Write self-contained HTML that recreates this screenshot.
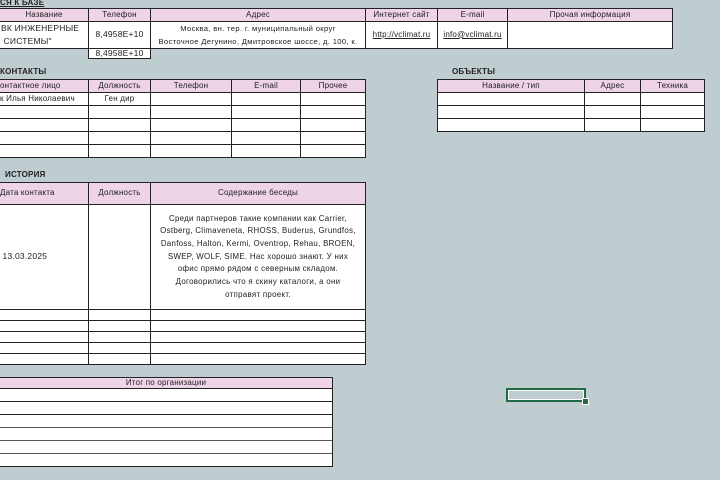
<!DOCTYPE html>
<html><head><meta charset="utf-8"><style>
body{margin:0;width:720px;height:480px;background:#bfcdd1;position:relative;overflow:hidden;font-family:"Liberation Sans","DejaVu Sans",sans-serif;font-size:8px;color:#222;letter-spacing:0.2px}
.c{position:absolute;box-sizing:border-box;border:1px solid #222;background:#fff;display:flex;align-items:center;justify-content:center;text-align:center;line-height:1.1;white-space:nowrap;overflow:hidden}
.h{background:#efd3e6}
.t{position:absolute;font-size:8px;font-weight:bold;color:#222}
u{color:#222}
</style></head><body>
<div class="t" style="left:0;top:-2px;text-decoration:underline">СЯ К БАЗЕ</div>

<div class="c h" style="left:-1px;top:8px;width:90px;height:14px">Название</div>
<div class="c h" style="left:88px;top:8px;width:63px;height:14px">Телефон</div>
<div class="c h" style="left:150px;top:8px;width:216px;height:14px">Адрес</div>
<div class="c h" style="left:365px;top:8px;width:73px;height:14px">Интернет сайт</div>
<div class="c h" style="left:437px;top:8px;width:71px;height:14px">E-mail</div>
<div class="c h" style="left:507px;top:8px;width:166px;height:14px">Прочая информация</div>
<div class="c" style="left:-1px;top:21px;width:90px;height:28px;justify-content:flex-start;padding-left:1px;white-space:normal;text-align:left;line-height:13px;font-size:8.5px">ВК ИНЖЕНЕРНЫЕ<br>&nbsp;СИСТЕМЫ"</div>
<div class="c" style="left:88px;top:21px;width:63px;height:28px;font-size:8.5px">8,4958E+10</div>
<div class="c" style="left:150px;top:21px;width:216px;height:28px;font-size:7.6px;line-height:13px;letter-spacing:0.35px">Москва, вн. тер. г. муниципальный округ<br>Восточное Дегунино, Дмитровское шоссе, д. 100, к.</div>
<div class="c" style="left:365px;top:21px;width:73px;height:28px"><u>http://vclimat.ru</u></div>
<div class="c" style="left:437px;top:21px;width:71px;height:28px"><u>info@vclimat.ru</u></div>
<div class="c" style="left:507px;top:21px;width:166px;height:28px"></div>
<div class="c" style="left:88px;top:48px;width:63px;height:11px;font-size:8.5px">8,4958E+10</div>

<div class="t" style="left:0;top:67px">КОНТАКТЫ</div>
<div class="c h" style="left:-1px;top:79px;width:90px;height:14px;justify-content:flex-start">онтактное лицо</div>
<div class="c h" style="left:88px;top:79px;width:63px;height:14px">Должность</div>
<div class="c h" style="left:150px;top:79px;width:82px;height:14px">Телефон</div>
<div class="c h" style="left:231px;top:79px;width:70px;height:14px">E-mail</div>
<div class="c h" style="left:300px;top:79px;width:66px;height:14px">Прочее</div>
<div class="c" style="left:-1px;top:92px;width:90px;height:14px;justify-content:flex-start">к Илья Николаевич</div>
<div class="c" style="left:88px;top:92px;width:63px;height:14px">Ген дир</div>
<div class="c" style="left:150px;top:92px;width:82px;height:14px"></div>
<div class="c" style="left:231px;top:92px;width:70px;height:14px"></div>
<div class="c" style="left:300px;top:92px;width:66px;height:14px"></div>
<div style="position:absolute;left:-1px;top:105px;width:367px;height:53px;box-sizing:border-box;border:1px solid #222;background:#fff;
background-image:linear-gradient(#222,#222),linear-gradient(#222,#222),linear-gradient(#222,#222),linear-gradient(#222,#222),linear-gradient(#222,#222),linear-gradient(#222,#222),linear-gradient(#222,#222);
background-size:1px 100%,1px 100%,1px 100%,1px 100%,100% 1px,100% 1px,100% 1px;background-repeat:no-repeat;
background-position:88px 0,150px 0,231px 0,300px 0,0 12px,0 25px,0 38px"></div>

<div class="t" style="left:452px;top:67px">ОБЪЕКТЫ</div>
<div class="c h" style="left:437px;top:79px;width:148px;height:14px">Название / тип</div>
<div class="c h" style="left:584px;top:79px;width:57px;height:14px">Адрес</div>
<div class="c h" style="left:640px;top:79px;width:65px;height:14px">Техника</div>
<div style="position:absolute;left:437px;top:92px;width:268px;height:40px;box-sizing:border-box;border:1px solid #222;background:#fff;
background-image:linear-gradient(#222,#222),linear-gradient(#222,#222),linear-gradient(#222,#222),linear-gradient(#222,#222);
background-size:1px 100%,1px 100%,100% 1px,100% 1px;background-repeat:no-repeat;background-position:146px 0,202px 0,0 12px,0 25px"></div>

<div class="t" style="left:5px;top:170px">ИСТОРИЯ</div>
<div class="c h" style="left:-1px;top:182px;width:90px;height:23px;justify-content:flex-start">Дата контакта</div>
<div class="c h" style="left:88px;top:182px;width:63px;height:23px">Должность</div>
<div class="c h" style="left:150px;top:182px;width:216px;height:23px">Содержание беседы</div>
<div class="c" style="left:-1px;top:204px;width:90px;height:106px;justify-content:flex-start;font-size:8.5px">&nbsp;13.03.2025</div>
<div class="c" style="left:88px;top:204px;width:63px;height:106px"></div>
<div class="c" style="left:150px;top:204px;width:216px;height:106px;line-height:12.7px;font-size:7.9px;letter-spacing:0.3px">Среди партнеров такие компании как Carrier,<br>Ostberg, Climaveneta, RHOSS, Buderus, Grundfos,<br>Danfoss, Halton, Kermi, Oventrop, Rehau, BROEN,<br>SWEP, WOLF, SIME. Нас хорошо знают. У них<br>офис прямо рядом с северным складом.<br>Договорились что я скину каталоги, а они<br>отправят проект.</div>
<div style="position:absolute;left:-1px;top:309px;width:367px;height:56px;box-sizing:border-box;border:1px solid #222;background:#fff;
background-image:linear-gradient(#222,#222),linear-gradient(#222,#222),linear-gradient(#222,#222),linear-gradient(#222,#222),linear-gradient(#222,#222),linear-gradient(#222,#222);
background-size:1px 100%,1px 100%,100% 1px,100% 1px,100% 1px,100% 1px;background-repeat:no-repeat;
background-position:88px 0,150px 0,0 10px,0 21px,0 32px,0 43px"></div>

<div class="c h" style="left:-1px;top:377px;width:334px;height:12px">Итог по организации</div>
<div style="position:absolute;left:-1px;top:388px;width:334px;height:79px;box-sizing:border-box;border:1px solid #222;background:#fff;
background-image:linear-gradient(#222,#222),linear-gradient(#222,#222),linear-gradient(#555,#555),linear-gradient(#555,#555),linear-gradient(#555,#555);
background-size:100% 1px,100% 1px,100% 1px,100% 1px,100% 1px;background-repeat:no-repeat;
background-position:0 12px,0 25px,0 38px,0 51px,0 64px"></div>

<div style="position:absolute;left:506px;top:388px;width:80px;height:14px;box-sizing:border-box;border:2px solid #1f6b45;outline:1px solid #fff;outline-offset:-3px"></div>
<div style="position:absolute;left:582px;top:398px;width:5px;height:5px;background:#1f6b45;border:1px solid #fff"></div>
</body></html>
